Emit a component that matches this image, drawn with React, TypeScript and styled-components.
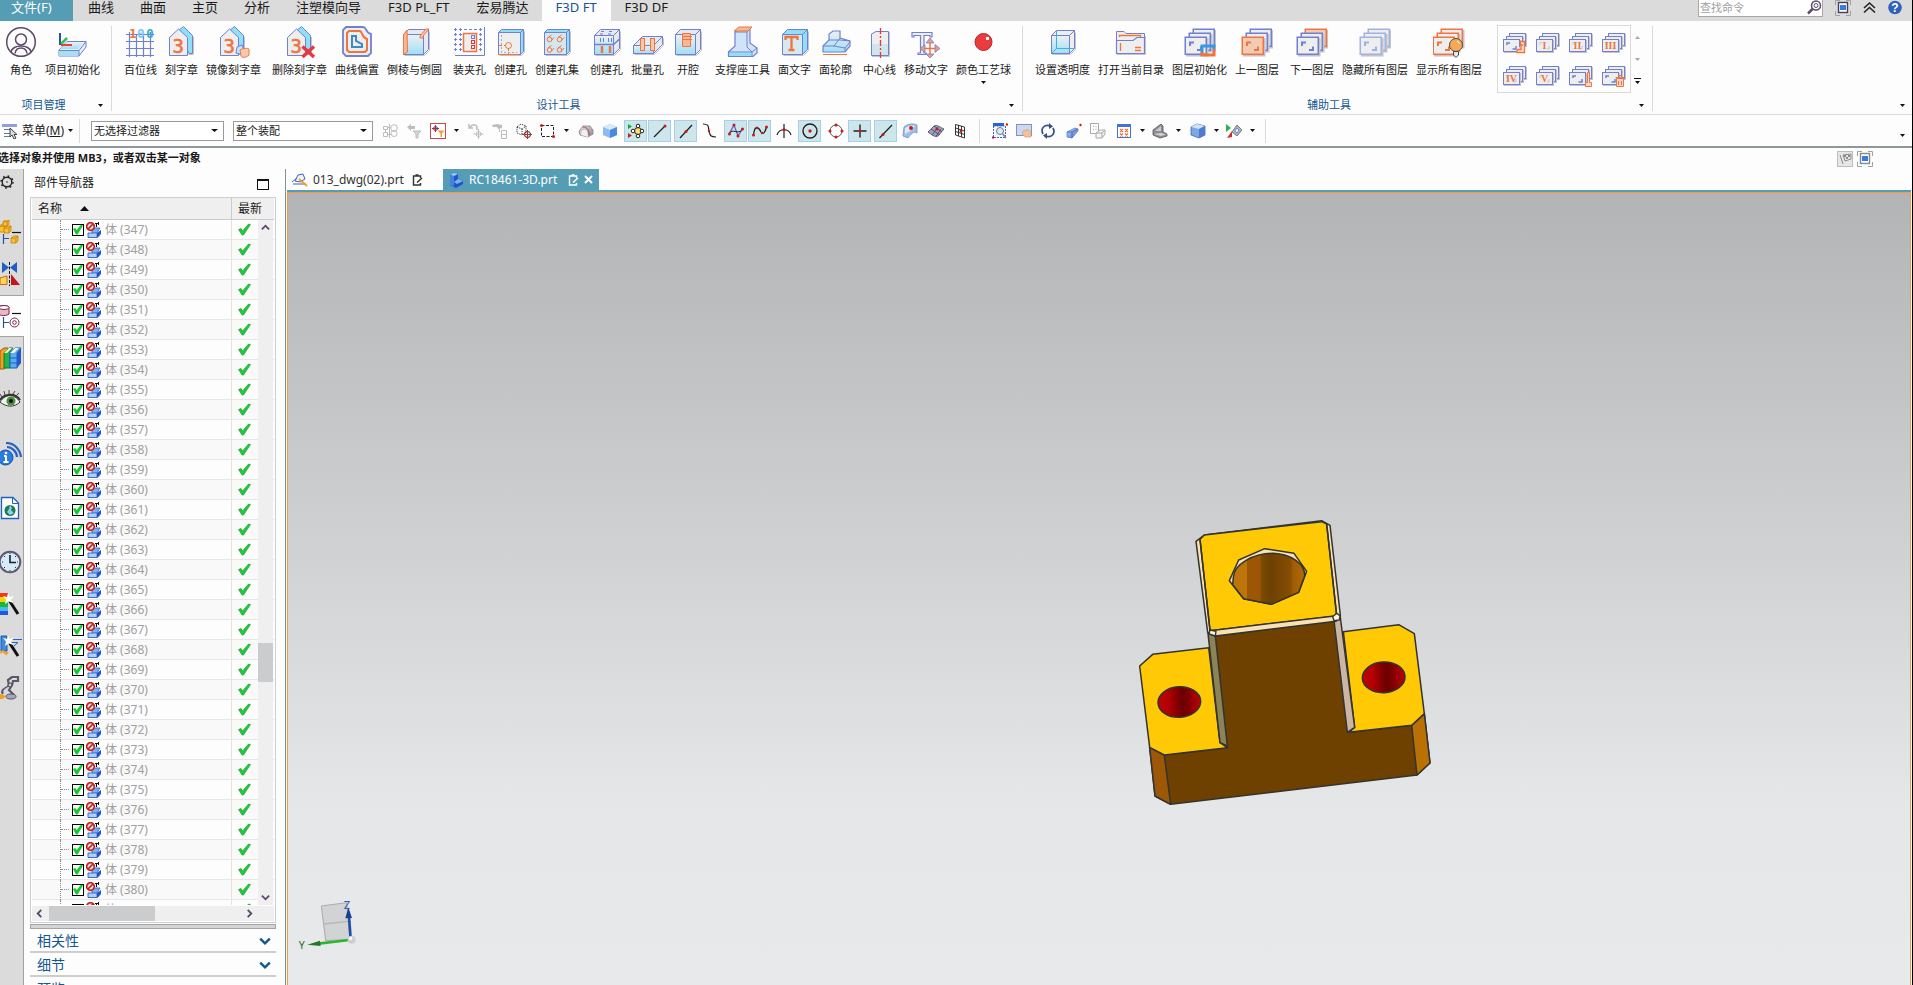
import React from 'react';
import styled, { createGlobalStyle, css } from 'styled-components';

const P = '#7080d2';
const O = '#f07440';
const G = '#eeeeef';
const S = '#c3c3c8';
const C = '#8fdff7';
const TEAL = '#549db5';
const LINE = '#dadada';

const GlobalStyle = createGlobalStyle`
  *, *::before, *::after { box-sizing: border-box; }
  body { margin: 0; background: #fdfdfd; color: #1a1a1a;
    font-family: "Noto Sans", "Noto Sans CJK SC", sans-serif; font-size: 12px; }
  button, input, select { font: inherit; color: inherit; margin: 0; }
  button { border: 0; padding: 0; background: none; }
  svg { display: block; flex: none; }
  #root { height: 100vh; }
`;

const Window = styled.div`
  display: flex;
  flex-direction: column;
  height: 100vh;
  min-height: 480px;
  overflow: hidden;
  border-right: 1px solid #000;
`;

/* ---------- menu tabs ---------- */
const MenuBar = styled.header`
  display: flex;
  justify-content: space-between;
  height: 21px;
  background: #dbdbdb;
`;
const MenuTabs = styled.nav`
  display: flex;
`;
const MenuTab = styled.button<{ $kind?: 'file' | 'active'; $wide?: boolean }>`
  height: 21px;
  padding: 0 ${p => (p.$wide ? 14 : 13)}px 7px;
  font-size: 13px;
  line-height: 14px;
  white-space: nowrap;
  ${p => p.$kind === 'file' && css`
    width: 73px;
    padding: 0 11px 7px;
    margin-right: 2px;
    text-align: left;
    background: ${TEAL};
    color: #fff;
  `}
  ${p => p.$kind === 'active' && css`
    background: #fdfdfd;
    color: #14568f;
  `}
`;
const MenuTools = styled.div`
  display: flex;
  align-items: flex-start;
  gap: 12px;
  padding-right: 10px;
`;
const Search = styled.label`
  display: flex;
  align-items: flex-start;
  width: 125px;
  height: 17px;
  background: #fff;
  border: 1px solid #a8a8a8;
  border-top: 0;
`;
const SearchInput = styled.input`
  flex: 1;
  min-width: 0;
  height: 14px;
  padding: 0 1px;
  border: 0;
  outline: 0;
  background: none;
  font-size: 11px;
  &::placeholder { color: #a0a0a0; opacity: 1; }
`;

/* ---------- ribbon ---------- */
const Ribbon = styled.section`
  display: flex;
  height: 94px;
  flex: none;
  border-bottom: 1px solid ${LINE};
`;
const Group = styled.div<{ $first?: boolean }>`
  display: flex;
  flex-direction: column;
  padding: 5px 7px 0 ${p => (p.$first ? 1 : 8)}px;
`;
const GroupLine = styled.div`
  width: 1px;
  margin: 5px 0 3px;
  background: ${LINE};
`;
const GroupBody = styled.div`
  display: flex;
  flex: 1;
  align-items: flex-start;
  gap: 3px;
`;
const Cluster = styled.div`
  display: flex;
`;
const RibbonButton = styled.button`
  display: flex;
  flex-direction: column;
  align-items: center;
  min-width: 40px;
  padding: 0 4px;
  font-size: 11px;
  line-height: 14px;
  white-space: nowrap;
`;
const RibbonLabel = styled.span`
  margin: 5px 0 4px;
`;
const GroupTitle = styled.div`
  display: flex;
  align-items: center;
  height: 18px;
  color: #14568f;
  font-size: 11px;
  line-height: 14px;
`;
const GroupName = styled.span`
  flex: 1;
  text-align: center;
`;
const MoreButton = styled.button`
  display: flex;
  justify-content: flex-end;
  width: 18px;
  padding-right: 1px;
`;
const Gallery = styled.div`
  display: flex;
  margin-left: 9px;
`;
const GalleryGrid = styled.div`
  display: grid;
  grid-template-columns: repeat(4, 33px);
  grid-auto-rows: 33px;
  outline: 1px solid ${LINE};
`;
const GalleryCell = styled.button`
  display: flex;
  align-items: center;
  justify-content: center;
`;
const GalleryNav = styled.div`
  display: grid;
  grid-template-rows: repeat(3, 22px);
  width: 15px;
  place-items: center;
`;
const RibbonRest = styled.div`
  display: flex;
  flex: 1;
  align-items: flex-end;
  justify-content: flex-end;
  padding: 0 6px 7px 0;
`;

/* ---------- selection toolbar ---------- */
const Toolbar = styled.section`
  display: flex;
  align-items: center;
  flex: none;
  height: 33px;
  border-bottom: 2px solid #8e989b;
`;
const MenuButton = styled.button`
  display: flex;
  align-items: center;
  gap: 4px;
  padding: 0 6px 0 2px;
  font-size: 12px;
  line-height: 16px;
`;
const BarLine = styled.div`
  width: 1px;
  height: 24px;
  background: ${LINE};
`;
const PickWrap = styled.label<{ $width: number; $gap: number }>`
  display: flex;
  width: ${p => p.$width}px;
  margin-left: ${p => p.$gap}px;
`;
const Pick = styled.select`
  width: 100%;
  height: 20px;
  padding: 0 2px;
  border: 1px solid #9a9a9a;
  border-radius: 0;
  appearance: none;
  font-size: 11px;
  background: #fff;
`;
const PickArrow = styled.span`
  display: flex;
  align-items: center;
  width: 0;
  pointer-events: none;
  svg { margin-left: -13px; }
`;
const Tools = styled.div<{ $lead: number }>`
  display: flex;
  gap: 2px;
  padding: 0 7px 0 ${p => p.$lead}px;
`;
const ToolPair = styled.div`
  display: flex;
`;
const Tool = styled.button<{ $on?: boolean }>`
  display: flex;
  align-items: center;
  justify-content: center;
  width: 23px;
  height: 22px;
  margin-right: 1px;
  ${p => p.$on && css`
    background: #cde6ec;
    border: 1px solid #a9cfe6;
  `}
`;
const ToolMore = styled.button`
  display: flex;
  align-items: center;
  justify-content: center;
  width: 12px;
  height: 22px;
`;
const ToolSpace = styled.div`
  display: flex;
  justify-content: flex-end;
  flex: 1;
  padding: 10px 6px 0 0;
`;

/* ---------- prompt line ---------- */
const Prompt = styled.section`
  display: flex;
  justify-content: space-between;
  flex: none;
  height: 21px;
  overflow: hidden;
`;
const PromptText = styled.p`
  margin: 2px 0 0;
  text-indent: -2px;
  font-size: 11px;
  font-weight: 700;
  line-height: 16px;
  white-space: nowrap;
`;
const PromptTools = styled.div`
  display: flex;
  gap: 4px;
  padding: 1px 39px 0 0;
`;

/* ---------- work area ---------- */
const Work = styled.main`
  display: flex;
  flex: 1;
  min-height: 0;
`;
const Rail = styled.nav`
  display: flex;
  flex-direction: column;
  width: 24px;
  background: #dbdbdb;
  border-right: 1px solid #a2a2a2;
`;
const RailGear = styled.button`
  height: 26px;
  margin-bottom: 16px;
`;
const RailGroup = styled.div<{ $loose?: boolean }>`
  display: flex;
  flex-direction: column;
  ${p => p.$loose && css`
    gap: 12px;
    padding-top: 12px;
  `}
`;
const RailButton = styled.button<{ $on?: boolean }>`
  display: flex;
  align-items: center;
  width: 24px;
  height: 42px;
  ${p => p.$on && css`
    background: #fdfdfd;
    border: solid #a2a2a2;
    border-width: 1px 0;
  `}
`;

const Panel = styled.aside`
  display: flex;
  flex-direction: column;
  width: 261px;
  padding: 0 9px 0 6px;
`;
const PanelHead = styled.div`
  display: flex;
  align-items: center;
  justify-content: space-between;
  height: 28px;
  padding: 0 7px 0 4px;
`;
const PanelTitle = styled.h2`
  margin: 0;
  font-size: 12px;
  font-weight: 400;
  line-height: 16px;
`;
const FloatButton = styled.button`
  width: 12px;
  height: 11px;
  margin-top: 2px;
  border: 1px solid #111;
  border-top-width: 2px;
`;
const TreeBox = styled.div`
  display: flex;
  flex-direction: column;
  flex: 1;
  min-height: 0;
  border: 1px solid #cfcfcf;
  padding: 0 1px 1px;
`;
const TreeView = styled.div`
  position: relative;
  flex: 1;
  min-height: 0;
  overflow: hidden;
`;
const Tree = styled.table`
  width: 100%;
  table-layout: fixed;
  border-collapse: separate;
  border-spacing: 0;
`;
const HeadCell = styled.th<{ $last?: boolean }>`
  width: ${p => (p.$last ? '43px' : 'auto')};
  height: 22px;
  padding: 0 6px;
  background: #efefef;
  border-bottom: 1px solid #cbcbcb;
  border-left: ${p => (p.$last ? '1px solid #cbcbcb' : '0')};
  font-weight: 400;
  line-height: 16px;
  text-align: left;
  white-space: nowrap;
`;
const HeadFlex = styled.span`
  display: flex;
  align-items: center;
  gap: 18px;
`;
const Row = styled.tr`
  &:nth-child(even) { background: #f9f9f9; }
`;
const Cell = styled.td<{ $last?: boolean }>`
  height: 20px;
  padding: 0 0 0 ${p => (p.$last ? 6 : 28)}px;
  border-bottom: 1px solid #e7e7e7;
  border-left: ${p => (p.$last ? '1px solid #e2e2e2' : '0')};
`;
const Node = styled.label`
  display: flex;
  align-items: center;
  height: 19px;
  color: #a0a0a0;
  line-height: 16px;
  white-space: nowrap;
`;
const Branch = styled.span`
  display: flex;
  align-items: center;
  width: 9px;
  height: 20px;
  margin-right: 3px;
  border-left: 1px dotted #8c8c8c;
  &::after { content: ''; width: 8px; border-top: 1px dotted #8c8c8c; }
`;
const Tick = styled.input`
  appearance: none;
  width: 12px;
  height: 12px;
  margin: 0 2px 0 0;
  border: 1px solid #000;
  background: #fff;
  &:checked::before {
    content: '';
    display: block;
    width: 10px;
    height: 10px;
    background: #10cc26;
    clip-path: polygon(0 46%, 22% 36%, 38% 54%, 78% 2%, 100% 10%, 46% 100%, 30% 100%);
  }
`;
const NodeName = styled.span`
  margin-left: 3px;
`;
const VBar = styled.div`
  position: absolute;
  top: 22px;
  right: 1px;
  bottom: 0;
  display: flex;
  flex-direction: column;
  align-items: center;
  width: 15px;
  background: #efefef;
`;
const BarEnd = styled.button`
  display: flex;
  align-items: center;
  justify-content: center;
  flex: none;
  width: 15px;
  height: 15px;
`;
const VTrack = styled.div`
  display: flex;
  flex-direction: column;
  flex: 1;
  width: 100%;
`;
const Spacer = styled.div<{ $grow: number }>`
  flex: ${p => p.$grow} 0 0;
`;
const VThumb = styled.div`
  height: 39px;
  background: #cbcccd;
`;
const HBar = styled.div`
  display: flex;
  align-items: center;
  height: 16px;
  padding-right: 17px;
  border-top: 1px solid #fdfdfd;
  background: #efefef;
`;
const HTrack = styled.div`
  flex: 1;
  height: 15px;
  padding-left: 2px;
`;
const HThumb = styled.div`
  width: 55%;
  height: 15px;
  background: #cbcccd;
`;
const Splitter = styled.div`
  flex: none;
  height: 5px;
  margin-top: 1px;
  border: 1px solid #a4a4a4;
  background: #d4d4d4;
`;
const Sections = styled.div`
  flex: none;
  height: 56px;
  overflow: hidden;
`;
const Section = styled.button`
  display: flex;
  align-items: center;
  justify-content: space-between;
  width: 100%;
  height: 24px;
  padding: 2px 5px 0 7px;
  border-bottom: 2px solid #cdcdcd;
  color: #14568f;
  font-size: 14px;
  line-height: 20px;
`;

const Stage = styled.section`
  display: flex;
  flex-direction: column;
  flex: 1;
  min-width: 0;
  border-left: 1px solid #8a9194;
  padding: 0 1px;
`;
const Docs = styled.div`
  display: flex;
  flex: none;
  height: 23px;
  border-bottom: 2px solid ${TEAL};
`;
const Doc = styled.div<{ $on?: boolean }>`
  display: flex;
  align-items: center;
  gap: 5px;
  width: 156px;
  padding: 0 6px 0 5px;
  line-height: 16px;
  white-space: nowrap;
  background: ${p => (p.$on ? TEAL : 'transparent')};
  color: ${p => (p.$on ? '#fff' : '#333')};
`;
const DocName = styled.button`
  min-width: 94px;
  line-height: 16px;
  text-align: left;
`;
const View = styled.div`
  position: relative;
  flex: 1;
  min-height: 0;
  border: solid #f29a45;
  border-width: 1px 1px 0;
  background: linear-gradient(#b3b4b6 0%, #cdced0 40%, #e5e7e8 78%, #e8e9eb 100%);
`;
const Model = styled.svg`
  position: absolute;
  left: calc(50% + 11px);
  top: calc(50% - 89px);
`;
const Triad = styled.svg`
  position: absolute;
  left: 8px;
  bottom: 29px;
`;

/* ---------- small glyphs ---------- */
const Down = ({ c = '#111', w = 5 }: { c?: string; w?: number }) => (
  <svg width={w} height={3} viewBox="0 0 10 6" preserveAspectRatio="none"><path d="M0 0H10L5 6Z" fill={c} /></svg>
);
const Up = () => <svg width={5} height={3} viewBox="0 0 10 6"><path d="M0 6H10L5 0Z" fill="#a8a8a8" /></svg>;
const Chevron = ({ turn, size = 9, c = '#5a4668', sw = 2 }: { turn: number; size?: number; c?: string; sw?: number }) => (
  <svg width={size} height={size} viewBox="0 0 10 10">
    <path d="M1 3L5 7L9 3" fill="none" stroke={c} strokeWidth={sw} transform={`rotate(${turn} 5 5)`} />
  </svg>
);

const I32 = ({ children }: { children: React.ReactNode }) => (
  <svg width={32} height={32} viewBox="0 0 32 32" fill="none" strokeWidth={1}>{children}</svg>
);
const I16 = ({ children }: { children: React.ReactNode }) => (
  <svg width={16} height={16} viewBox="0 0 16 16" fill="none" strokeWidth={1}>{children}</svg>
);

const Defs = styled.svg`
  position: absolute;
`;
const Gradients = () => (
  <Defs width={0} height={0} aria-hidden="true">
    <defs>
      <linearGradient id="sky" x1="0" y1="0" x2="0" y2="1"><stop offset="0" stopColor="#eef0f2" /><stop offset="1" stopColor="#9fdff4" /></linearGradient>
      <linearGradient id="blue" x1="0" y1="0" x2="1" y2="1"><stop offset="0" stopColor="#c4dcf8" /><stop offset="1" stopColor="#3f6fc4" /></linearGradient>
      <linearGradient id="grey" x1="0" y1="0" x2="1" y2="1"><stop offset="0" stopColor="#e6e6ea" /><stop offset="1" stopColor="#85858f" /></linearGradient>
      <linearGradient id="bore" x1="0" y1="0" x2="1" y2="0">
        <stop offset="0" stopColor="#bd7408" /><stop offset=".2" stopColor="#bd7408" /><stop offset=".2" stopColor="#9c5606" />
        <stop offset=".38" stopColor="#9c5606" /><stop offset=".4" stopColor="#7d4b02" /><stop offset=".52" stopColor="#6c4102" />
        <stop offset=".66" stopColor="#7a4602" /><stop offset=".8" stopColor="#864e04" /><stop offset=".84" stopColor="#a15c05" /><stop offset="1" stopColor="#b36a06" />
      </linearGradient>
      <linearGradient id="red" x1="0" y1="0" x2="1" y2="0">
        <stop offset="0" stopColor="#c40204" /><stop offset=".26" stopColor="#b00003" /><stop offset=".46" stopColor="#820002" />
        <stop offset=".58" stopColor="#6a0001" /><stop offset=".72" stopColor="#820002" /><stop offset="1" stopColor="#c20204" />
      </linearGradient>
    </defs>
  </Defs>
);

const Cube = ({ x = 3, y = 3, w = 25, h = 25, d = 5, front = 'url(#sky)', side = '#e6eaef' }:
  { x?: number; y?: number; w?: number; h?: number; d?: number; front?: string; side?: string }) => (
  <g transform="translate(.5 .5)">
    <path d={`M${x + 1} ${y + h + 1}H${x + w - d + 1}L${x + w + 1} ${y + h - d + 1}V${y + 2}`} stroke={S} />
    <path d={`M${x} ${y + d}L${x + d} ${y}H${x + w}V${y + h - d}L${x + w - d} ${y + h}H${x}Z`} fill={side} stroke={P} />
    <path d={`M${x} ${y + d}H${x + w - d}V${y + h}H${x}Z`} fill={front} stroke={P} />
    <path d={`M${x + w - d} ${y + d}L${x + w} ${y}`} stroke={P} />
  </g>
);

const House = ({ x }: { x: number }) => (
  <g transform={`translate(${x} 0)`}>
    <path d="M9.500 4.500L14.500.5L23.500 9.500V27.500H20Z" fill={C} stroke={P} />
    <path d="M24.500 11V28.500H19" stroke={S} />
    <path d="M.5 11.500L9.500 3L18.500 11.500V29.500H.5Z" fill={G} stroke={P} />
    <text x="3.500" y="26.500" fontFamily="DejaVu Sans Mono" fontSize="19" fill={O} stroke={O} strokeWidth=".6">3</text>
  </g>
);

const Stack = ({ f = [P, P, P], fill = [G, G, G], x = 0 }: { f?: string[]; fill?: string[]; x?: number }) => (
  <g transform={`translate(${x} 0)`}>
    {[[9, 3], [5, 7], [1, 11]].map(([px, py], i) => (
      <g key={i} strokeWidth="1.500">
        <rect x={px + 1.750} y={py + 1.750} width="21" height="17" stroke={S} />
        <rect x={px + .250} y={py + .250} width="21" height="17" fill={fill[i]} stroke={f[i]} />
      </g>
    ))}
    <path d="M6 20V16.500H10" stroke={f[2]} strokeWidth="2" />
    <path d="M17 20.500V24H13" stroke={f[2]} strokeWidth="2" />
  </g>
);

const MiniStack = ({ mark, children }: { mark?: string; children?: React.ReactNode }) => (
  <svg width={24} height={24} viewBox="0 0 24 24" fill="none" strokeWidth="1">
    {[[6.500, 2.500], [3.500, 5.500], [.5, 8.500]].map(([px, py], i) => (
      <g key={i}>
        <rect x={px + 1} y={py + 1} width="16" height="12" stroke={S} />
        <rect x={px} y={py} width="16" height="12" fill={G} stroke={P} />
      </g>
    ))}
    {mark ? (
      <>
        <path d="M4 14V11.500H6M13 15V18H11" stroke="#c9c9d0" />
        <text x="8.500" y="18" textAnchor="middle" fontFamily="Liberation Serif" fontWeight="700" fontSize="10" fill={O}>{mark}</text>
      </>
    ) : (
      <path d="M4 14V12H7M13 15V18H9.500" stroke={P} strokeWidth="1.500" />
    )}
    {children}
  </svg>
);

const holes = (pts: number[][]) => pts.map(([x, y], i) => (
  <g key={i}><circle cx={x} cy={y} r="2.300" stroke={O} /><path d={`M${x - 1.500} ${y - 2}L${x + 2} ${y - 4.500}M${x + 2} ${y + 1}L${x + 4.500} ${y - 2}`} stroke={O} /></g>
));

const ribbonIcons: Record<string, React.ReactNode> = {
  角色: <I32><g stroke="#5b4a69" strokeWidth="1.500"><circle cx="16" cy="16" r="14.300" /><circle cx="16" cy="13.500" r="5.500" /><path d="M6 26C7 18 25 18 26 26M10 27.500C11 20 21 20 22 27.500" /></g></I32>,
  项目初始化: <I32><path d="M2 24L10 15.500H29V21L22 30H2Z" fill="#dff2f9" stroke={P} /><path d="M2 24.500H22V30H2Z" fill="#a9def2" /><path d="M2 24.500H22L29 15.500M22 24.500V30" stroke={P} /><path d="M10 16L3 23H21L27 16Z" fill="url(#sky)" /><path d="M3 7V19" stroke="#2552a8" strokeWidth="2" /><path d="M4 18L10 12" stroke="#34c24a" strokeWidth="2.500" /><path d="M4 19H15" stroke="#ea3f3f" strokeWidth="2" /></I32>,
  百位线: <I32><path d="M4.500 6V31M11.500 8V31M18.500 8V31M25.500 6V31M1 8.500H29M1 15.500H29M1 22.500H29M1 29.500H29" stroke={P} strokeWidth="1.200" /><g fontFamily="DejaVu Sans Mono" fontWeight="700" fontSize="13"><text x="4" y="11.500" fill={O}>1</text><text x="12" y="11.500" fill="#7cc8f4">0</text><text x="21" y="11.500" fill="#3eacd0">0</text></g></I32>,
  刻字章: <I32><House x={3} /></I32>,
  镜像刻字章: <I32><House x={2} /><path d="M19 21L24 19L26 24L22 28L18 27Z" fill="#c3e6f5" stroke={P} /><path d="M22 24C25 22 30 22 31 23V29C28 32 24 32 23 30Z" fill="#f5c9ae" stroke={O} /></I32>,
  删除刻字章: <I32><House x={3} /><path d="M18.500 20.500L30 31M30 20.500L18.500 31" stroke="#e23a40" strokeWidth="3.400" /></I32>,
  曲线偏置: <I32><path d="M5 1H22C26 1 24 7 30 8V27L27 30H5L2 27V4Z" fill={G} stroke={P} strokeWidth="1.800" /><path d="M8 5H19C22 6 20 11 26 13V24L24 26H8L6 24V7Z" stroke={O} strokeWidth="2" /><path d="M11 10H15V15L21 18V21H11Z" stroke="#4089c8" strokeWidth="2" /></I32>,
  倒棱与倒圆: <I32><Cube x={4} /><path d="M4.500 8.500L8 4L8.500 26L4.500 28.500Z" fill="#f5b998" stroke={O} /><path d="M21 10L27 3H30L24 10V12H21Z" fill="#f5c9ae" stroke={O} /></I32>,
  装夹孔: <I32><g stroke={P}>{[3, 8, 13, 18, 23].map(y => <path key={y} d={`M0 ${y + .5}H31`} strokeDasharray="3 2" />)}{[1, 6, 26].map(x => <path key={x} d={`M${x + .5} 2V27`} strokeDasharray="3 2" />)}</g><path d="M1 29.500H30.500V1" stroke={P} /><rect x="9.500" y="7.500" width="13" height="18" fill={G} stroke={O} strokeWidth="1.500" /><rect x="17.500" y="9.500" width="3" height="3" stroke={P} /><rect x="17.500" y="14.500" width="3" height="3" stroke="#e33" /><rect x="17.500" y="19.500" width="3" height="3" stroke="#e33" /></I32>,
  创建孔: <I32><Cube d={3} side={C} front={G} /><circle cx="13.500" cy="19.500" r="3" stroke={O} /><path d="M4 19.500H11M13.500 22V28" stroke={O} strokeDasharray="3 2" /><path d="M6.500 9V26.500H22" stroke="#aab" strokeDasharray="2 2" /><path d="M3 28.500H24" stroke={O} /></I32>,
  创建孔集: <I32><Cube d={3} side={C} front="#d3e7ee" />{holes([[8.500, 13.500], [18.500, 13.500], [8.500, 24], [18.500, 24]])}</I32>,
  创建孔2: <I32><Cube d={6} /><path d="M3 18.500H22.500L28.500 13" stroke={P} strokeWidth="1.500" /><path d="M10 5.500H13M18 5.500H21M9 8H12M17 8H20" stroke={P} /><path d="M9.500 12V16M12.500 12V16M17.500 12V16M20.500 12V16" stroke={P} /><path d="M11 20V27M19 20V27" stroke={O} strokeWidth="2.500" /></I32>,
  批量孔: <I32><Cube x={1} y={10} w={29} h={17} d={9} /><rect x="8.500" y="12.500" width="4" height="12" fill="#f5c9ae" stroke={O} /><rect x="18.500" y="12.500" width="4" height="12" fill="#f5c9ae" stroke={O} /></I32>,
  开腔: <I32><Cube d={5} /><path d="M10.500 7.500H18.500V20.500H10.500Z" fill="#f5b998" stroke={O} /><path d="M11 10.500H20M11 13.500H20" stroke={O} /></I32>,
  支撑座工具: <I32><path d="M8 6L12 3H23V17L30 22V27L26 30.500H1.500V26L8 20Z" fill="#cfe5f7" stroke={P} strokeWidth="1.200" /><path d="M8 6H20V21L25 26H1M25 26V31M25 26L30 22M20 6L23 3" stroke={P} /><path d="M2 27H24V30H2Z" fill={C} /><path d="M7 5L12 1H25L21 5Z" fill="#f5b998" stroke={O} /></I32>,
  面文字: <I32><Cube front="#d5e9ef" side={C} /><path d="M6.500 14V11H18.500V14M12.500 11V24M9.500 24H15.500" stroke={O} strokeWidth="2.300" /></I32>,
  面轮廓: <I32><path d="M3 20L9 14V8L13 5H20V12L30 15V20L25 26H3Z" fill="url(#sky)" stroke={P} strokeWidth="1.200" /><path d="M9 14H20L30 15M3 20H14L25 22V26M25 22L30 16M14 20L20 12" stroke={P} /><path d="M3 28.500H27" stroke={O} /></I32>,
  中心线: <I32><path d="M7.500 8L12 5.500H24.500V29.500H7.500Z" fill={G} stroke={P} /><path d="M8 18H24V29H8Z" fill="#cfe6ee" /><path d="M25.500 6V30.500H8" stroke={S} /><path d="M16.500 2V32" stroke="#e33" strokeDasharray="6 2 2 2" strokeWidth="1.300" /></I32>,
  移动文字: <I32><path d="M2 11V6.500H22V11H20V9.500H14V27H16V28.500H8V27H10.500V9.500H4V11Z" fill={G} stroke={P} strokeWidth="1.200" /><path d="M20 15V30M12 22.500H28" stroke={O} strokeWidth="1.500" /><path d="M20 12L24 17H16ZM20 32L24 28H16ZM10 22.500L15 18.500V26.500ZM30 22.500L25 18.500V26.500Z" fill="#f39a76" stroke={P} strokeWidth=".8" /></I32>,
  颜色工艺球: <I32><circle cx="15.500" cy="16" r="8.500" fill="#e93c3c" stroke="#b9242c" /><rect x="18" y="11" width="3" height="3" fill="#fff" /></I32>,
  设置透明度: <I32><Cube x={4} y={4} w={23} h={23} side={G} /><path d="M9.500 5V22.500H27M4.500 27.500L9.500 22.500" stroke="#35b4e6" /></I32>,
  打开当前目录: <I32><path d="M1.500 12V5.500H9L11 7.500H29.500V28H1.500Z" fill={G} stroke={P} /><path d="M4.500 11V9.500H25.500V12" stroke={O} strokeWidth="1.300" /><path d="M1.500 27.500V14.500H18L22 11.500H29.500V27.500Z" fill={G} stroke={P} strokeWidth="1.200" /><path d="M5.500 17V25M20 21.500H26M20 24.500H26" stroke={O} strokeWidth="1.300" /><path d="M3 28.500H30.500V10" stroke={S} /></I32>,
  图层初始化: <I32><Stack /><path d="M18 28V20H30V25" stroke="#3a97e0" strokeWidth="3" /><path d="M18 26V29H30V23" stroke={O} strokeWidth="3" /></I32>,
  上一图层: <I32><Stack f={[P, P, O]} fill={[G, G, '#f2cbb0']} /></I32>,
  下一图层: <I32><Stack f={[O, P, P]} fill={['#f2cbb0', G, G]} /></I32>,
  隐藏所有图层: <I32><Stack f={['#9fb2e2', '#9fb2e2', '#9fb2e2']} /></I32>,
  显示所有图层: <I32><Stack f={[O, O, O]} x={-1} /><circle cx="23" cy="19" r="6.500" fill="#f5a95a" stroke="#5b4a35" /><path d="M20.500 25.500H25.500V29L23 31.500L20.500 29Z" fill="#e8e8e8" stroke="#444" /><path d="M24 15L27 17.500" stroke="#fff" /></I32>,
};

type Btn = { label: string; icon?: string; more?: boolean };
const projectTools: Btn[][] = [[{ label: '角色' }, { label: '项目初始化' }]];
const designTools: Btn[][] = [
  [{ label: '百位线' }, { label: '刻字章' }, { label: '镜像刻字章' }],
  [{ label: '删除刻字章' }, { label: '曲线偏置' }, { label: '倒棱与倒圆' }],
  [{ label: '装夹孔' }, { label: '创建孔' }, { label: '创建孔集' }],
  [{ label: '创建孔', icon: '创建孔2' }, { label: '批量孔' }, { label: '开腔' }],
  [{ label: '支撑座工具' }, { label: '面文字' }, { label: '面轮廓' }],
  [{ label: '中心线' }, { label: '移动文字' }, { label: '颜色工艺球', more: true }],
];
const helperTools: Btn[][] = [
  [{ label: '设置透明度' }, { label: '打开当前目录' }, { label: '图层初始化' }, { label: '上一图层' }],
  [{ label: '下一图层' }, { label: '隐藏所有图层' }, { label: '显示所有图层' }],
];

const Clusters = ({ sets }: { sets: Btn[][] }) => (
  <>
    {sets.map((set, i) => (
      <Cluster key={i}>
        {set.map(b => (
          <RibbonButton key={b.icon ?? b.label} type="button">
            {ribbonIcons[b.icon ?? b.label]}
            <RibbonLabel>{b.label}</RibbonLabel>
            {b.more && <Down />}
          </RibbonButton>
        ))}
      </Cluster>
    ))}
  </>
);

const Title = ({ children }: { children: string }) => (
  <GroupTitle>
    <GroupName>{children}</GroupName>
    <MoreButton type="button" aria-label={`${children} 选项`}><Down /></MoreButton>
  </GroupTitle>
);

/* ---------- toolbar icons ---------- */
const K = '#222';
const Dot = ({ x, y, r = 1.500 }: { x: number; y: number; r?: number }) => <circle cx={x} cy={y} r={r} fill="#d01818" />;
const GL = '#bdbdbd';

const toolIcons: Record<string, React.ReactNode> = {
  选择组件: <I16><path d="M1.500 3.500H5.500V6.500H1.500ZM1.500 9.500H5.500V13.500H1.500ZM7.500 1V15M6 4.500H9M6 11.500H9M3.500 6V9" stroke={GL} /><circle cx="12" cy="5" r="3.300" stroke={GL} /><circle cx="12" cy="10.500" r="3" stroke={GL} /></I16>,
  恢复过滤器: <I16><path d="M1 4L5 1V3H9V6H5V8Z" fill={GL} /><path d="M7 8H15L12 11V15H10V11Z" fill="#d5d5d5" stroke={GL} /></I16>,
  过滤器: <I16><rect x=".5" y=".5" width="15" height="15" stroke="#c9474e" fill="#fff" /><circle cx="5.500" cy="5.500" r="2" stroke="#3b4c9a" /><path d="M5.500 2V9M2 5.500H9" stroke="#c22" /><path d="M7.500 7.500H14.500L12 10.500V14H10.500V10.500Z" fill="#f49b35" /></I16>,
  撤销选择: <I16><path d="M1 1V5H5M2 4C5 1 9 1 9 5V7" stroke={GL} strokeWidth="1.500" /><path d="M10.500 6V16M5.500 11H15.500" stroke={GL} /><circle cx="10.500" cy="11" r="2.500" stroke={GL} /></I16>,
  刷选: <I16><path d="M0 2L5 1L10 2V5L6 6L5 4H1Z" fill={GL} /><path d="M9.500 7.500H14.500V15.500H9.500ZM9.500 11.500H14.500M7.500 6V9" stroke={GL} /></I16>,
  全选: <I16><path d="M1 4L5 1L10 3V9L6 12L1 10ZM1 4L6 6L10 3M6 6V12" stroke={K} strokeDasharray="1 1" /><circle cx="11.500" cy="11.500" r="3" stroke={K} /><path d="M11.500 7V16M7 11.500H16" stroke="#c22" /></I16>,
  矩形选择: <I16><rect x="1.500" y="2.500" width="12" height="11" stroke={K} strokeDasharray="3 1.500" /><Dot x={1.500} y={2.500} /><Dot x={13.500} y={13.500} /></I16>,
  面规则: <I16><path d="M1 8L5 3H12L15 7V11L10 14L2 12Z" fill="url(#grey)" stroke="#888" strokeWidth=".8" /><path d="M6 7C9 6 10 9 10 14L3 12C3 9 4 7 6 7Z" fill="#f0f0f2" /><path d="M5 4C9 4 11 7 11 12" stroke="#c22" strokeWidth=".8" /></I16>,
  实体: <I16><path d="M1 4L8 1L15 4V12L8 15L1 12Z" fill="#8bbcf0" /><path d="M1 4L8 7L15 4L8 1Z" fill="#d7e9fb" /><path d="M8 7L15 4V12L8 15Z" fill="#4a8ade" /></I16>,
  启用捕捉点: <I16><path d="M0 1L4 3.500L0 6Z" fill="#12a83a" /><path d="M0 10L4 12.500L0 15Z" fill="#c22" /><circle cx="10" cy="8" r="3.500" fill="#ffe267" stroke={K} /><circle cx="10" cy="3" r="1.800" stroke={K} fill="#fff" /><circle cx="10" cy="13" r="1.800" stroke={K} fill="#fff" /><circle cx="5" cy="8" r="1.800" stroke={K} fill="#fff" /><circle cx="14" cy="8" r="1.800" stroke={K} fill="#fff" /></I16>,
  端点: <I16><path d="M2 14L13 3" stroke={K} strokeWidth="1.300" /><Dot x={13} y={3} /></I16>,
  中点: <I16><path d="M2 15L14 2" stroke={K} strokeWidth="1.300" /><Dot x={8} y={8.500} /></I16>,
  控制点: <I16><path d="M1 1C8 1 6 5 7 8C8 12 8 14 14 14" stroke={K} strokeWidth="1.200" /><Dot x={7} y={8} r={1.200} /></I16>,
  极点: <I16><path d="M1 11L6 2L10 13L15 5" stroke="#6b5bc2" strokeWidth="1.300" /><path d="M1 11C5 4 9 13 15 6" stroke={K} /><Dot x={1.500} y={11} /><Dot x={6} y={2} /><Dot x={10} y={13} /><Dot x={14.500} y={6} /></I16>,
  样条点: <I16><path d="M1.500 12C3 0 7 5 9 9C11 12 13 10 14.500 4" stroke={K} strokeWidth="1.300" /><Dot x={1.500} y={12} /><Dot x={5} y={5} r={1.200} /><Dot x={10} y={10} r={1.200} /><Dot x={14.500} y={4} /></I16>,
  交点: <I16><path d="M8 1V15M1 12C3 5 13 5 15 12" stroke={K} strokeWidth="1.200" /><Dot x={8} y={6.500} /></I16>,
  圆弧中心: <I16><circle cx="8" cy="8" r="7" stroke={K} strokeWidth="1.400" /><Dot x={8} y={8} r={1.700} /></I16>,
  象限点: <I16><circle cx="8" cy="8" r="6" stroke="#555" /><Dot x={8} y={2} /><Dot x={8} y={14} /><Dot x={2} y={8} /><Dot x={14} y={8} /></I16>,
  现有点: <I16><path d="M8 1.500V14.500M1.500 8H14.500" stroke={K} strokeWidth="1.400" /><Dot x={8} y={8} /></I16>,
  曲线上的点: <I16><path d="M1.500 15L14 2" stroke={K} strokeWidth="1.300" /><Dot x={5} y={11.500} /></I16>,
  面上的点: <I16><path d="M2 4C5 1 11 0 15 2V10C11 8 9 11 6 15L1 13Z" fill="#9dbfe8" stroke="#6d8fc8" strokeWidth=".8" /><path d="M3 5C6 3 10 2 13 3L8 8L3 11Z" fill="#dbe9f9" /><Dot x={9} y={5} r={2} /></I16>,
  有界点: <I16><path d="M0 9L6 3C9 1 13 5 16 6L10 13C7 15 3 11 0 9Z" fill="#9ba0cf" stroke="#444" strokeWidth=".8" /><path d="M3 6L12 12M6 3L14 9M4 12L10 4M8 13L13 6" stroke="#444" strokeWidth=".8" /><Dot x={9} y={6} /></I16>,
  网格点: <I16><path d="M3.500 1.500L12.500 4V15L3.500 12ZM6.500 2V13M9.500 3V14M3.500 5L12.500 8M3.500 8.500L12.500 11.500" stroke={K} strokeWidth=".9" /><Dot x={9} y={8} /></I16>,
  适合窗口: <I16><path d="M1.500 3H13.500V14.500H1.500Z" fill="#f4f7fc" stroke="#3568d4" strokeDasharray="2 1" /><path d="M1 0H12V3H1Z" fill="#2e62d2" /><circle cx="8" cy="8" r="3.500" fill="#dce9f5" stroke="#777" /><path d="M10.500 10.500L14 15" stroke="#888" strokeWidth="1.500" /><Dot x={15} y={1.500} r={1.200} /><Dot x={1} y={14.500} r={1.200} /></I16>,
  平移: <I16><rect x=".5" y="1.500" width="15" height="11" fill="#cbd9f4" stroke="#7f93be" /><path d="M6 10L8 7L10 8L11 6L15 9V14H9Z" fill="#efc298" stroke="#d59b6b" strokeWidth=".7" /></I16>,
  旋转: <I16><path d="M3 11C0 5 5 1 10 3M13 5C16 11 11 15 6 13" stroke="#3a4f86" strokeWidth="1.700" /><path d="M9 0L13 3.500L9 6ZM7 16L3 12.500L7 10Z" fill="#3a4f86" /></I16>,
  透视: <I16><path d="M1 9L9 5L12 6V8L6 15L1 14Z" fill="url(#blue)" stroke="#5b7fc6" strokeWidth=".8" /><path d="M1 9H6V15M6 9L12 6" stroke="#3f62b0" strokeWidth=".8" /><Dot x={14.500} y={2} r={1.200} /></I16>,
  截面: <I16><path d="M.5 .5H8.500V10.500H.5ZM3 3.500H4M5.500 3.500H6.500M3 6.500H4M5.500 6.500H6.500" stroke="#aaa" /><path d="M6 10L10 7H15V11L12 15H6ZM6 10H12V15M12 10L15 7" stroke="#aaa" fill="#f4f4f4" /></I16>,
  布局: <I16><rect x="1.500" y="1.500" width="13" height="13" fill="#fff" stroke="#3f73d8" /><path d="M1 1H15V4H1Z" fill="#3f73d8" /><path d="M4 6L7 9M7 6L4 9M9 6L12 9M12 6L9 9M4 10.500L7 13.500M7 10.500L4 13.500M9 10.500L12 13.500M12 10.500L9 13.500" stroke={O} strokeWidth="1.300" /></I16>,
  样式: <I16><path d="M1 7L9 1L11 3V9L15 11V13L8 15L1 12Z" fill="#8d8d93" stroke="#56565c" strokeWidth=".8" /><path d="M3 8L9 3V8Z" fill="#c9c9cf" /><path d="M2 11L9 13L14 11.500L9 10Z" fill="#d2d2d8" /></I16>,
  视图: <I16><path d="M1 4L7 1L15 3V12L9 15L1 12Z" fill="#7ea6e2" stroke="#3e67b2" strokeWidth=".8" /><path d="M1 4L9 6L15 3L7 1Z" fill="#cfe2fa" /><path d="M9 6V15L15 12V3Z" fill="#4c7ccb" /></I16>,
  剪切截面: <I16><path d="M0 1L5 5L0 9Z" fill="#2cb34a" /><path d="M1 15L6 8V14Z" fill="#d8252c" /><path d="M6 9L11 2L16 7L11 13Z" fill="#aab4c6" stroke="#666" strokeWidth=".8" /><path d="M9 8L11 5L13 7L11 10Z" fill="#fff" stroke="#3568d4" strokeWidth=".7" /></I16>,
};

type ToolDef = { n: string; on?: boolean; more?: boolean };
const t = (n: string, on = false, more = false): ToolDef => ({ n, on, more });
const selectTools: ToolDef[][] = [
  [t('选择组件'), t('恢复过滤器'), t('过滤器', false, true)],
  [t('撤销选择'), t('刷选'), t('全选'), t('矩形选择', false, true)],
  [t('面规则'), t('实体')],
  [t('启用捕捉点', true), t('端点', true)],
  [t('中点', true), t('控制点')],
  [t('极点', true), t('样条点', true), t('交点')],
  [t('圆弧中心', true)],
  [t('象限点'), t('现有点', true)],
  [t('曲线上的点', true), t('面上的点')],
  [t('有界点'), t('网格点')],
];
const viewTools: ToolDef[][] = [
  [t('适合窗口'), t('平移'), t('旋转')],
  [t('透视'), t('截面')],
  [t('布局', false, true), t('样式', false, true)],
  [t('视图', false, true), t('剪切截面', false, true)],
];
const ToolSets = ({ sets, lead }: { sets: ToolDef[][]; lead: number }) => (
  <Tools $lead={lead}>
    {sets.map((set, i) => (
      <ToolPair key={i}>
        {set.map(d => (
          <React.Fragment key={d.n}>
            <Tool type="button" $on={d.on} aria-label={d.n} aria-pressed={d.on}>{toolIcons[d.n]}</Tool>
            {d.more && <ToolMore type="button" aria-label={`${d.n} 更多`}><Down /></ToolMore>}
          </React.Fragment>
        ))}
      </ToolPair>
    ))}
  </Tools>
);

const WindowIcon = ({ c = '#333a6a' }: { c?: string }) => (
  <I16><path d="M.5 5V.5H5M11 .5H15.500V5M15.500 11V15.500H11M5 15.500H.5V11" stroke="#a0a0a0" /><rect x="3.500" y="2.500" width="9" height="10" fill="#fff" stroke={c} strokeWidth="1.400" /><rect x="5" y="5" width="6" height="5" fill="#3b7be0" /></I16>
);

/* ---------- resource bar icons ---------- */
const I24 = ({ children }: { children: React.ReactNode }) => (
  <svg width={24} height={24} viewBox="0 0 24 24" fill="none">{children}</svg>
);
const box = (x: number, y: number, s: number) => (
  <g key={`${x}-${y}`} stroke="#c27e08" strokeWidth=".8"><path d={`M${x} ${y + s * .3}L${x + s * .4} ${y}H${x + s}V${y + s * .7}L${x + s * .7} ${y + s}H${x}Z`} fill="#f9bf35" /><path d={`M${x} ${y + s * .3}H${x + s * .7}V${y + s}M${x + s * .7} ${y + s * .3}L${x + s} ${y}`} /></g>
);
const Wand = () => <><path d="M9 8L18 22" stroke="#111" strokeWidth="3" /><path d="M8 1L9.500 5L14 4L11 7.500L13 11L9 9.500L5 12L6 7.500L3 4L7 5Z" fill="#fff" /></>;
const rail: { n: string; on?: boolean; icon: React.ReactNode }[][] = [
  [
    { n: '装配导航器', icon: <I24>{box(-1, 4, 8)}{box(3, 0, 6)}{box(4, 6, 7)}{box(11, 16, 7)}<path d="M3.500 14V24M3 18.500H9" stroke="#2553a4" strokeWidth="1.200" /><path d="M12 12.500H21" stroke="#111" strokeWidth="1.200" /></I24> },
    { n: '约束导航器', icon: <I24><path d="M2 0L9 5.500L2 11ZM17 0L10 5.500L17 11Z" fill="#1e5fc6" /><path d="M9.500 0V24" stroke="#111" strokeDasharray="3 1.500" /><path d="M0 22.500V16L7 14V22.500Z" fill="#ffd45a" stroke="#c96a08" /><path d="M11 23V12L20 23Z" fill="#c3151b" /></I24> },
    { n: '部件导航器', on: true, icon: <I24><path d="M-2 3C0 1 7 1 9 3V10C7 12 0 12 -2 10Z" fill="#e9b7c5" stroke="#7b2744" /><ellipse cx="4" cy="3.500" rx="5" ry="2" fill="#fff" stroke="#7b2744" /><path d="M12 9.500H21" stroke="#111" strokeWidth="1.200" /><path d="M3.500 13V24M3 18.500H9" stroke="#2553a4" strokeWidth="1.200" /><circle cx="14.500" cy="18.500" r="4.500" stroke="#7b2744" /><circle cx="14.500" cy="18.500" r="1.800" stroke="#7b2744" /></I24> },
    { n: '重用库', icon: <I24><path d="M0 5L4 2H8V20L4 23H0Z" fill="#f0a020" stroke="#9a5a08" /><path d="M4 7L9 2H13L10 6V22H4Z" fill="#23b34a" stroke="#0c7d2b" /><path d="M10 7L15 2H21L17 7V22H10Z" fill="#59aef0" stroke="#1f5cc0" /><path d="M17 7L21 2V17L17 22Z" fill="#2158cc" /><path d="M4 7L9 2H12L7 7ZM10 7L15 2H19L14 7Z" fill="#f4f4e8" /><path d="M10 12H17M10 17H17" stroke="#1f5cc0" /></I24> },
    { n: '视图管理', icon: <I24><path d="M0 14C5 6 14 5 20 14C14 20 6 19 0 14Z" fill="#f2f2f2" stroke="#333" /><circle cx="11" cy="13" r="4.500" fill="#4b8c3d" /><circle cx="11" cy="13" r="2" fill="#111" /><path d="M0 12C4 6 15 4 20 12" stroke="#333" strokeWidth="2" /><path d="M2 9L0 6M5 7L4 3M9 6L9 2M13 6L15 3M16 8L19 5" stroke="#444" /></I24> },
  ],
  [
    { n: '信息', icon: <I24><circle cx="5.500" cy="15.500" r="7.500" fill="#2a7de0" stroke="#1650a8" /><path d="M6 13.500V20M3.500 20H8.500M4 14H6" stroke="#fff" strokeWidth="2" /><circle cx="6" cy="11" r="1.300" fill="#fff" /><path d="M6 1C14 1 20 7 21 15M7 5C12 5 17 10 17 15" stroke="#2563c4" strokeWidth="2.200" /></I24> },
    { n: '网页', icon: <I24><path d="M1.500 1.500H13L18.500 7V22.500H1.500Z" fill="#fdfdfd" stroke="#2260c2" strokeWidth="1.300" /><path d="M12.500 1.500V7.500H18.500" stroke="#2260c2" /><circle cx="10" cy="14.500" r="5.500" fill="#1d7c4c" /><path d="M10 9L12 12L11 14L14 17L10 19L7 16L9 13Z" fill="#8ccdf2" /></I24> },
    { n: '历史记录', icon: <I24><circle cx="10" cy="12" r="10.300" fill="#d7eaf5" stroke="#5c5874" strokeWidth="2" /><path d="M10 5V12.500H16" stroke="#123" strokeWidth="1.600" /><path d="M10 3V4M10 20V21M2 12H3M17 12H18M4 6L5 7M16 6L15 7M4 18L5 17M16 18L15 17" stroke="#234" /></I24> },
  ],
  [
    { n: '渲染', icon: <I24><rect y="1" width="8" height="4" fill="#f03a1c" /><rect y="5" width="8" height="5" fill="#f8d20c" /><rect y="10" width="8" height="5" fill="#19b83a" /><rect y="15" width="8" height="4" fill="#4cb6ee" /><rect y="19" width="8" height="4" fill="#2158dc" /><Wand /></I24> },
    { n: '加工向导', icon: <I24><path d="M1 2H7V17H1Z" fill="#3d8be0" stroke="#1b56ae" /><path d="M8 5.500H22M10 8.500H18L14 12" stroke="#2563c4" /><path d="M0 19L3 17L6 20L8 18" stroke="#f0a020" strokeWidth="2" /><Wand /></I24> },
    { n: '机构', icon: <I24><path d="M3 18C0 14 6 12 9 10L8 4L12 1H18V5H13L12 9L9 14L14 19" stroke="#5b5868" strokeWidth="2.200" /><path d="M4 15C5 13 8 12 9 11" stroke="#d5d3e0" strokeWidth="1.500" /><path d="M0 18L6 20L3 23H0Z" fill="#f0a020" /><ellipse cx="11" cy="20.500" rx="5" ry="2.500" fill="#a9a5b8" stroke="#55526a" /><circle cx="10" cy="9" r="2" fill="#c9c7d6" stroke="#444" /></I24> },
  ],
];

const BodyIcon = () => (
  <I16>
    <path d="M9 1.500H13M12.500 0V3M10.500 1V5" stroke="#111" />
    <path d="M6 9L8 6H14L12 9V12H6Z" fill="#7fb0ee" stroke="#2f62c6" strokeWidth=".8" />
    <path d="M2 11H11L15 8V12L12 15.500H2Z" fill="#2456c4" />
    <path d="M2 11H11V15.500H2Z" fill="#a9d2fa" stroke="#2456c4" strokeWidth=".8" />
    <circle cx="4.500" cy="4.500" r="3.800" fill="#f3e9e9" stroke="#c8201c" strokeWidth="1.700" />
    <path d="M2 7L7 2" stroke="#c8201c" strokeWidth="1.700" />
  </I16>
);
const GreenCheck = () => (
  <svg width={13} height={13} viewBox="0 0 13 13"><path d="M.5 6.500L3 5.500L4.500 8L10.500 1L12.500 1.500L5.500 12H4Z" fill="#1ecb38" stroke="#0f9a28" strokeWidth=".6" /></svg>
);

const bodies = Array.from({ length: 35 }, (_, i) => 347 + i);

const PartNavigator = () => (
  <Panel>
    <PanelHead>
      <PanelTitle>部件导航器</PanelTitle>
      <FloatButton type="button" aria-label="浮动" />
    </PanelHead>
    <TreeBox>
      <TreeView>
        <Tree>
          <thead>
            <tr>
              <HeadCell><HeadFlex>名称<svg width={9} height={5} viewBox="0 0 9 5"><path d="M0 5L4.500 0L9 5Z" fill="#111" /></svg></HeadFlex></HeadCell>
              <HeadCell $last>最新</HeadCell>
            </tr>
          </thead>
          <tbody>
            {bodies.map(n => (
              <Row key={n}>
                <Cell>
                  <Node>
                    <Branch />
                    <Tick type="checkbox" defaultChecked />
                    <BodyIcon />
                    <NodeName>体 ({n})</NodeName>
                  </Node>
                </Cell>
                <Cell $last><GreenCheck /></Cell>
              </Row>
            ))}
          </tbody>
        </Tree>
        <VBar>
          <BarEnd type="button" aria-label="向上"><Chevron turn={180} /></BarEnd>
          <VTrack><Spacer $grow={408} /><VThumb /><Spacer $grow={208} /></VTrack>
          <BarEnd type="button" aria-label="向下"><Chevron turn={0} /></BarEnd>
        </VBar>
      </TreeView>
      <HBar>
        <BarEnd type="button" aria-label="向左"><Chevron turn={90} /></BarEnd>
        <HTrack><HThumb /></HTrack>
        <BarEnd type="button" aria-label="向右"><Chevron turn={-90} /></BarEnd>
      </HBar>
    </TreeBox>
    <Splitter />
    <Sections>
      {['相关性', '细节', '预览'].map(s => (
        <Section key={s} type="button">{s}<Chevron turn={0} size={12} c="#14568f" /></Section>
      ))}
    </Sections>
  </Panel>
);

const NoteIcon = ({ c }: { c: string }) => (
  <svg width={11} height={12} viewBox="0 0 11 12" fill="none"><path d="M8.500 4V2H1.500V11H8.500V9M3.500 1H6.500" stroke={c} strokeWidth="1.400" /><path d="M5 8.500L10 4" stroke={c} strokeWidth="1.500" /></svg>
);

const Part = () => (
  <Model width={350} height={330} viewBox="0 0 1050 990" stroke="#33332f" strokeWidth="4.500" strokeLinejoin="round" role="img" aria-label="零件模型">
    <path d="M119 742L163 765L352 743L300 400L680 350L716 697L905 676L943 641L960 789L921 825L182 913L135 888Z" fill="#6e4100" />
    <path d="M119 742L163 765L182 913L135 888Z" fill="#9c5707" />
    <path d="M905 676L943 641L960 789L921 825Z" fill="#b97103" />
    <path d="M89 498L128 463L296 443L330 728L352 743L163 765L119 742Z" fill="#ffca05" />
    <path d="M700 395L866 374L913 401L943 641L905 676L716 697L734 682Z" fill="#ffca05" />
    <path d="M294 400L316 407L352 738L330 728Z" fill="#8b8457" />
    <path d="M672 362L690 345L734 682L712 697Z" fill="#ccb5a2" />
    <path d="M258 124L283 105L635 62L660 76L691 345L678 362L316 408L293 397Z" fill="#f8e2b4" />
    <path d="M270 118L283 105L635 65L650 72L680 348L300 392Z" fill="#ffca05" />
    <path d="M650 72L680 345M270 118L300 390" />
    <path d="M300 392L680 347L690 352L678 364L316 408L297 400Z" fill="#f8e2b4" />
    <path d="M300 390L318 394L316 408L297 402ZM668 350L680 340L690 347L688 360L672 362Z" fill="#fdf3dc" strokeWidth="4" />
    <path d="M358 242L386 180L464 146L552 160L590 214L566 277L484 313L401 296Z" fill="#f8e2b4" />
    <path d="M370 232C372 192 430 160 490 160C540 162 586 190 584 228L566 277L484 313L401 296L368 254Z" fill="url(#bore)" />
    <ellipse cx="208" cy="606" rx="64" ry="46" fill="url(#red)" transform="rotate(-3 208 606)" />
    <ellipse cx="821" cy="532" rx="64" ry="46" fill="url(#red)" transform="rotate(-3 821 532)" />
  </Model>
);

const Axes = () => (
  <Triad width={64} height={60} viewBox="888 588 192 180" role="img" aria-label="坐标系">
    <path d="M964 618L1040 608L1050 718L977 722Z" fill="#d2d3d5" stroke="#a9aaac" strokeWidth="3" />
    <path d="M970 672L1044 664" stroke="#b5b6b8" strokeWidth="4" />
    <path d="M1052 716L1047 650" stroke="#1d4fa8" strokeWidth="8" />
    <path d="M1036 655L1045 622L1056 654Z" fill="#16418e" />
    <path d="M1048 720L955 731" stroke="#2fb52f" strokeWidth="8" />
    <path d="M922 734L960 722L962 738Z" fill="#23772a" />
    <circle cx="1055" cy="719" r="12" fill="#cfcfd1" />
    <circle cx="1052" cy="715" r="5" fill="#fff" />
    <text x="896" y="747" fontSize="32" fill="#2d6b2d" fontFamily="Noto Sans">Y</text>
    <text x="1031" y="626" fontSize="34" fill="#2f57b8" fontFamily="Noto Sans">Z</text>
  </Triad>
);

export default function App() {
  return (
    <Window>
      <GlobalStyle />
      <Gradients />
      <MenuBar>
        <MenuTabs>
          <MenuTab type="button" $kind="file">文件(F)</MenuTab>
          {['曲线', '曲面', '主页', '分析', '注塑模向导'].map(m => <MenuTab key={m} type="button">{m}</MenuTab>)}
          <MenuTab type="button" $wide>F3D PL_FT</MenuTab>
          <MenuTab type="button">宏易腾达</MenuTab>
          <MenuTab type="button" $kind="active" $wide>F3D FT</MenuTab>
          <MenuTab type="button" $wide>F3D DF</MenuTab>
        </MenuTabs>
        <MenuTools>
          <Search>
            <SearchInput type="text" placeholder="查找命令" aria-label="查找命令" />
            <svg width={16} height={15} viewBox="0 0 16 15" fill="none"><circle cx="10" cy="5.500" r="4.500" stroke="#5b4a69" strokeWidth="1.500" /><circle cx="10" cy="5.500" r="2" stroke="#5b4a69" /><path d="M6.500 9L2 13.500" stroke="#5b4a69" strokeWidth="2.500" /></svg>
          </Search>
          <button type="button" aria-label="全屏"><WindowIcon c="#4a3c5c" /></button>
          <button type="button" aria-label="最小化功能区">
            <svg width={13} height={15} viewBox="0 0 13 15" fill="none"><path d="M1 8L6.500 3L12 8M1 12.500L6.500 7.500L12 12.500" stroke="#222" strokeWidth="1.600" /></svg>
          </button>
          <button type="button" aria-label="帮助">
            <svg width={14} height={15} viewBox="0 0 14 15"><circle cx="7" cy="7.500" r="6.800" fill="#3162b8" /><text x="7" y="12" textAnchor="middle" fontSize="12" fontWeight="700" fill="#fff" fontFamily="Liberation Sans">?</text></svg>
          </button>
        </MenuTools>
      </MenuBar>

      <Ribbon>
        <Group $first>
          <GroupBody><Clusters sets={projectTools} /></GroupBody>
          <Title>项目管理</Title>
        </Group>
        <GroupLine />
        <Group>
          <GroupBody><Clusters sets={designTools} /></GroupBody>
          <Title>设计工具</Title>
        </Group>
        <GroupLine />
        <Group>
          <GroupBody>
            <Clusters sets={helperTools} />
            <Gallery>
              <GalleryGrid>
                <GalleryCell type="button" aria-label="图层设置"><MiniStack><path d="M13 21.500H21.500V10.500H17.500V14H20M13 21L15 18.500H18V14" fill="#f8e4d8" stroke={O} strokeWidth="1.400" /></MiniStack></GalleryCell>
                {['I', 'II', 'III', 'IV', 'V'].map(m => <GalleryCell key={m} type="button"><MiniStack mark={m} /></GalleryCell>)}
                <GalleryCell type="button" aria-label="编辑图层"><MiniStack><path d="M18.500 8.500H20.500V18.500H22.500V22.500H16.500V18.500H18.500Z" fill="#f8d8c6" stroke={O} /></MiniStack></GalleryCell>
                <GalleryCell type="button" aria-label="删除图层"><MiniStack><path d="M14.500 14.500H21.500V22.500H14.500Z" fill="#f8d8c6" stroke={O} /><path d="M13.500 13.500H22.500M16.500 11.500H19.500M16.500 17V21M19.500 17V21" stroke={O} /></MiniStack></GalleryCell>
              </GalleryGrid>
              <GalleryNav>
                <button type="button" aria-label="上翻"><Up /></button>
                <button type="button" aria-label="下翻"><Down c="#a8a8a8" /></button>
                <button type="button" aria-label="展开"><svg width={7} height={6} viewBox="0 0 7 6"><path d="M0 0H7V1H0ZM1 3H6L3.500 6Z" fill="#111" /></svg></button>
              </GalleryNav>
            </Gallery>
          </GroupBody>
          <Title>辅助工具</Title>
        </Group>
        <GroupLine />
        <RibbonRest><MoreButton type="button" aria-label="功能区选项"><Down /></MoreButton></RibbonRest>
      </Ribbon>

      <Toolbar>
        <MenuButton type="button">
          <I16><path d="M0 2.500H15M2 6.500H8M2 10.500H8M2 13.500H8" stroke="#6a78a8" strokeWidth="1.200" /><path d="M0 1H15V4H0Z" fill="#8fa0dc" /><path d="M8 5V14L10 12L12 16L14 15L12 11.500H15Z" fill="#d9d9e2" stroke="#444" /></I16>
          <span>菜单(<u>M</u>)</span>
          <Down />
        </MenuButton>
        <BarLine />
        <PickWrap $width={133} $gap={11}>
          <Pick aria-label="类型过滤器"><option>无选择过滤器</option></Pick>
          <PickArrow><Down w={7} /></PickArrow>
        </PickWrap>
        <PickWrap $width={140} $gap={9}>
          <Pick aria-label="选择范围"><option>整个装配</option></Pick>
          <PickArrow><Down w={7} /></PickArrow>
        </PickWrap>
        <ToolSets sets={selectTools} lead={5} />
        <BarLine />
        <ToolSets sets={viewTools} lead={8} />
        <BarLine />
        <ToolSpace><MoreButton type="button" aria-label="工具条选项"><Down /></MoreButton></ToolSpace>
      </Toolbar>

      <Prompt>
        <PromptText>选择对象并使用 MB3，或者双击某一对象</PromptText>
        <PromptTools>
          <button type="button" aria-label="完成草图"><I16><rect x=".5" y=".5" width="15" height="15" fill="#e6e6e6" stroke="#bdbdbd" /><path d="M3 4L6 13M6 4L14 3V8L8 10Z" stroke="#8a8a8a" /><path d="M7 4H9V6H7ZM11 4H13V6H11ZM9 6H11V8H9Z" fill="#8a8a8a" /></I16></button>
          <button type="button" aria-label="窗口"><WindowIcon c="#7b8f86" /></button>
        </PromptTools>
      </Prompt>

      <Work>
        <Rail>
          <RailGear type="button" aria-label="设置">
            <svg width={14} height={14} viewBox="0 0 14 14" fill="none"><circle cx="7" cy="7" r="4.800" stroke="#222" strokeWidth="1.400" /><circle cx="7" cy="7" r="6" stroke="#222" strokeWidth="1.500" strokeDasharray="1.700 3" /><circle cx="7" cy="7" r=".8" fill="#222" /></svg>
          </RailGear>
          {rail.map((set, i) => (
            <RailGroup key={i} $loose={i === 1}>
              {set.map(r => <RailButton key={r.n} type="button" $on={r.on} aria-label={r.n}>{r.icon}</RailButton>)}
            </RailGroup>
          ))}
        </Rail>
        <PartNavigator />
        <Stage>
          <Docs>
            <Doc>
              <svg width={16} height={14} viewBox="0 0 16 14" fill="none"><path d="M3 8L6 2L11 1L13 6L8 9Z" fill="#eef3fd" stroke="#3c62c4" /><path d="M0 9L5 5M1 11H14" stroke="#3c62c4" /><path d="M7 6L15 13" stroke="#f0a020" strokeWidth="2" /></svg>
              <DocName type="button">013_dwg(02).prt</DocName>
              <NoteIcon c="#333" />
            </Doc>
            <Doc $on>
              <svg width={16} height={16} viewBox="0 0 16 16"><path d="M2 3L6 1L10 2V7L15 9V12L8 16L2 13Z" fill="#1f55c6" /><path d="M2 3L6 1L10 2L6 4Z" fill="#a9cdf8" /><path d="M6 10L10 7L15 9L9 12Z" fill="#7fb0f2" /><path d="M2 3L6 4V14L2 13Z" fill="#4482e2" /></svg>
              <DocName type="button">RC18461-3D.prt</DocName>
              <NoteIcon c="#fff" />
              <button type="button" aria-label="关闭"><svg width={9} height={9} viewBox="0 0 9 9"><path d="M1 1L8 8M8 1L1 8" stroke="#fff" strokeWidth="2" /></svg></button>
            </Doc>
          </Docs>
          <View>
            <Part />
            <Axes />
          </View>
        </Stage>
      </Work>
    </Window>
  );
}
